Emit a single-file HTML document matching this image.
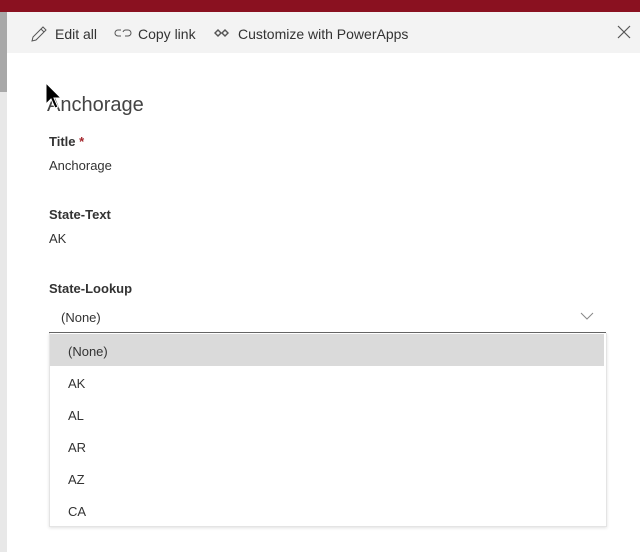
<!DOCTYPE html>
<html><head><style>
body{margin:0;width:640px;height:552px;background:#fff;position:relative;overflow:hidden;font-family:"Segoe UI","Liberation Sans",sans-serif;color:#333}
.a{position:absolute}
.lbl{font-weight:bold;font-size:13px;color:#333}
.v{font-size:13px;color:#333}
.it{position:absolute;left:68px;font-size:13px;color:#333}
</style></head><body>
<div class="a" style="left:0;top:0;width:640px;height:12px;background:#8a1120"></div>
<div class="a" style="left:0;top:12px;width:7px;height:540px;background:#e8e8e8"></div>
<div class="a" style="left:0;top:12px;width:7px;height:80px;background:#a8a8a8"></div>
<div class="a" style="left:7px;top:12px;width:633px;height:41px;background:#f3f3f3"></div>
<svg class="a" style="left:30px;top:25px" width="18" height="18" viewBox="0 0 18 18"><path d="M2 16 L3 12 L13 2 L16 5 L6 15 Z M11 4 L14 7" fill="none" stroke="#555" stroke-width="1"/></svg>
<div class="a v" style="left:55px;top:26px;font-size:14px">Edit all</div>
<svg class="a" style="left:114px;top:27px" width="18" height="12" viewBox="0 0 18 12"><path d="M7 3 H4 A3 3 0 0 0 4 9 H7 M9 5 A3 3 0 0 1 12 3 H14 A3 3 0 0 1 14 9 H11" fill="none" stroke="#555" stroke-width="1"/></svg>
<div class="a v" style="left:138px;top:26px;font-size:14px">Copy link</div>
<svg class="a" style="left:214px;top:28px" width="16" height="10" viewBox="0 0 16 10"><path d="M4 1 L8 5 L4 9 L0 5Z M11 1 L15 5 L11 9 L7 5Z" fill="#555"/><path d="M4 3 L6 5 L4 7 L2 5Z M11 3 L13 5 L11 7 L9 5Z" fill="#f3f3f3"/></svg>
<div class="a v" style="left:238px;top:26px;font-size:14px">Customize with PowerApps</div>
<svg class="a" style="left:617px;top:25px" width="14" height="14" viewBox="0 0 14 14"><path d="M1 1 L13 13 M13 1 L1 13" stroke="#555" stroke-width="1.2"/></svg>
<div class="a" style="left:47px;top:94px;font-size:20px;color:#444;font-weight:300">Anchorage</div>
<svg class="a" style="left:45px;top:82px" width="20" height="30" viewBox="0 0 20 30"><path d="M1 1 L1 22 L6 17 L10 26 L13 25 L9 16 L16 16 Z" fill="#000" stroke="#fff" stroke-width="1"/></svg>
<div class="a lbl" style="left:49px;top:134px">Title <span style="color:#a4262c">*</span></div>
<div class="a v" style="left:49px;top:158px">Anchorage</div>
<div class="a lbl" style="left:49px;top:207px">State-Text</div>
<div class="a v" style="left:49px;top:231px">AK</div>
<div class="a lbl" style="left:49px;top:281px">State-Lookup</div>
<div class="a v" style="left:61px;top:310px">(None)</div>
<svg class="a" style="left:580px;top:312px" width="14" height="9" viewBox="0 0 14 9"><path d="M1 1 L7 7 L13 1" fill="none" stroke="#888" stroke-width="1"/></svg>
<div class="a" style="left:49px;top:332px;width:557px;height:1px;background:#666"></div>
<div class="a" style="left:49px;top:333px;width:556px;height:193px;background:#fff;border:1px solid #e4e4e4;border-top:none;box-shadow:0 1px 3px rgba(0,0,0,.12)"></div>
<div class="a" style="left:50px;top:334px;width:554px;height:32px;background:#dadada"></div>
<div class="it" style="top:344px">(None)</div>
<div class="it" style="top:376px">AK</div>
<div class="it" style="top:408px">AL</div>
<div class="it" style="top:440px">AR</div>
<div class="it" style="top:472px">AZ</div>
<div class="it" style="top:504px">CA</div>
</body></html>
